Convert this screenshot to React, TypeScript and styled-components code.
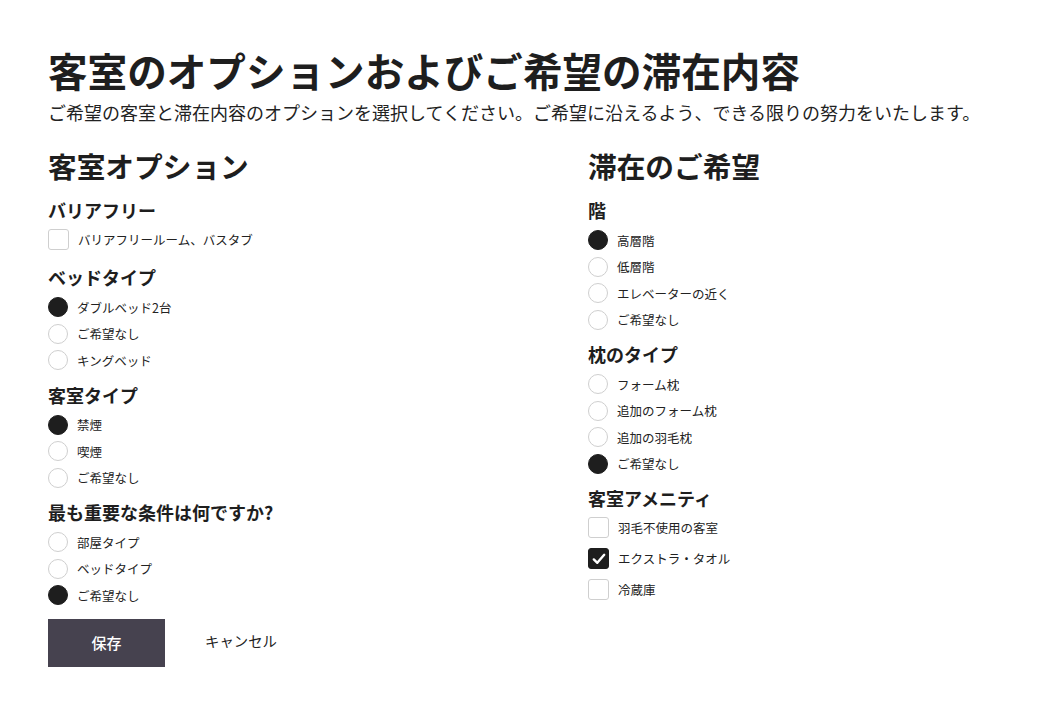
import React, { useState } from 'react';
import styled, { createGlobalStyle } from 'styled-components';

const GlobalStyle = createGlobalStyle`
  body {
    margin: 0;
    background: #ffffff;
    color: #222222;
    font-family: "Noto Sans CJK JP", "Noto Sans", sans-serif;
  }
`;

const Page = styled.main`
  padding: 46px 48px 40px;
`;

const Title = styled.h1`
  margin: 0;
  font-size: 39.6px;
  line-height: 48px;
  font-weight: 700;
  color: #1e1e1e;
`;

const Lead = styled.p`
  margin: 6px 0 0;
  font-size: 18px;
  line-height: 24px;
  color: #222;
`;

const Columns = styled.div`
  display: grid;
  grid-template-columns: 540px 1fr;
  margin-top: 24px;
`;

const Column = styled.section`
  display: flex;
  flex-direction: column;
`;

const SectionTitle = styled.h2`
  margin: 0 0 14px;
  font-size: 28.7px;
  line-height: 36px;
  font-weight: 700;
  color: #1e1e1e;
`;

const Group = styled.fieldset<{ $check?: boolean }>`
  border: 0;
  margin: 0 0 ${(p) => (p.$check ? '10px' : '9px')};
  padding: 0;
`;

const GroupTitle = styled.h3`
  margin: 0;
  font-size: 18px;
  line-height: 24px;
  font-weight: 700;
  color: #1e1e1e;
`;

const List = styled.div<{ $check?: boolean }>`
  display: flex;
  flex-direction: column;
  margin-top: ${(p) => (p.$check ? '2px' : '5px')};
`;

const Row = styled.label<{ $check?: boolean }>`
  display: flex;
  align-items: center;
  gap: 9px;
  height: ${(p) => (p.$check ? '31px' : '26.5px')};
  font-size: 12.5px;
  color: #222;
  cursor: pointer;
`;

const Radio = styled.span<{ $on: boolean }>`
  width: 20px;
  height: 20px;
  box-sizing: border-box;
  border-radius: 50%;
  border: 1px solid ${(p) => (p.$on ? '#1e1e1e' : '#cfcfcf')};
  background: ${(p) => (p.$on ? '#1e1e1e' : '#fff')};
  flex-shrink: 0;
`;

const Box = styled.span<{ $on: boolean }>`
  width: 21px;
  height: 21px;
  box-sizing: border-box;
  border-radius: 3px;
  border: 1px solid ${(p) => (p.$on ? '#1e1e1e' : '#cfcfcf')};
  background: ${(p) => (p.$on ? '#1e1e1e' : '#fff')};
  display: flex;
  align-items: center;
  justify-content: center;
  flex-shrink: 0;
`;

const Actions = styled.div`
  display: flex;
  align-items: center;
  gap: 40px;
  margin-top: 1px;
`;

const SaveButton = styled.button`
  width: 117px;
  height: 48px;
  border: 0;
  background: #46424f;
  color: #fff;
  font-family: inherit;
  font-size: 15px;
  font-weight: 500;
  cursor: pointer;
`;

const CancelButton = styled.button`
  border: 0;
  background: none;
  padding: 0;
  margin-top: -5px;
  color: #222;
  font-family: inherit;
  font-size: 14.4px;
  cursor: pointer;
`;

type RadioGroupProps = { title: string; options: string[]; initial: number };

function RadioGroup({ title, options, initial }: RadioGroupProps) {
  const [sel, setSel] = useState(initial);
  return (
    <Group>
      <GroupTitle>{title}</GroupTitle>
      <List>
        {options.map((o, i) => (
          <Row key={o} onClick={() => setSel(i)}>
            <Radio $on={sel === i} />
            {o}
          </Row>
        ))}
      </List>
    </Group>
  );
}

type CheckGroupProps = { title: string; options: string[]; initial: boolean[] };

function CheckGroup({ title, options, initial }: CheckGroupProps) {
  const [vals, setVals] = useState(initial);
  const toggle = (i: number) => setVals(vals.map((v, j) => (j === i ? !v : v)));
  return (
    <Group $check>
      <GroupTitle>{title}</GroupTitle>
      <List $check>
        {options.map((o, i) => (
          <Row $check key={o} onClick={() => toggle(i)}>
            <Box $on={vals[i]}>
              {vals[i] && (
                <svg width="14" height="12" viewBox="0 0 14 12">
                  <path d="M1.8 6.4 L5.3 9.8 L12.2 1.8" fill="none" stroke="#fff" strokeWidth="2.4" strokeLinecap="round" strokeLinejoin="round" />
                </svg>
              )}
            </Box>
            {o}
          </Row>
        ))}
      </List>
    </Group>
  );
}

function App() {
  return (
    <Page>
      <GlobalStyle />
      <Title>客室のオプションおよびご希望の滞在内容</Title>
      <Lead>ご希望の客室と滞在内容のオプションを選択してください。ご希望に沿えるよう、できる限りの努力をいたします。</Lead>
      <Columns>
        <Column>
          <SectionTitle>客室オプション</SectionTitle>
          <CheckGroup title="バリアフリー" options={['バリアフリールーム、バスタブ']} initial={[false]} />
          <RadioGroup title="ベッドタイプ" options={['ダブルベッド2台', 'ご希望なし', 'キングベッド']} initial={0} />
          <RadioGroup title="客室タイプ" options={['禁煙', '喫煙', 'ご希望なし']} initial={0} />
          <RadioGroup title="最も重要な条件は何ですか?" options={['部屋タイプ', 'ベッドタイプ', 'ご希望なし']} initial={2} />
          <Actions>
            <SaveButton>保存</SaveButton>
            <CancelButton>キャンセル</CancelButton>
          </Actions>
        </Column>
        <Column>
          <SectionTitle>滞在のご希望</SectionTitle>
          <RadioGroup title="階" options={['高層階', '低層階', 'エレベーターの近く', 'ご希望なし']} initial={0} />
          <RadioGroup title="枕のタイプ" options={['フォーム枕', '追加のフォーム枕', '追加の羽毛枕', 'ご希望なし']} initial={3} />
          <CheckGroup title="客室アメニティ" options={['羽毛不使用の客室', 'エクストラ・タオル', '冷蔵庫']} initial={[false, true, false]} />
        </Column>
      </Columns>
    </Page>
  );
}

export default App;
